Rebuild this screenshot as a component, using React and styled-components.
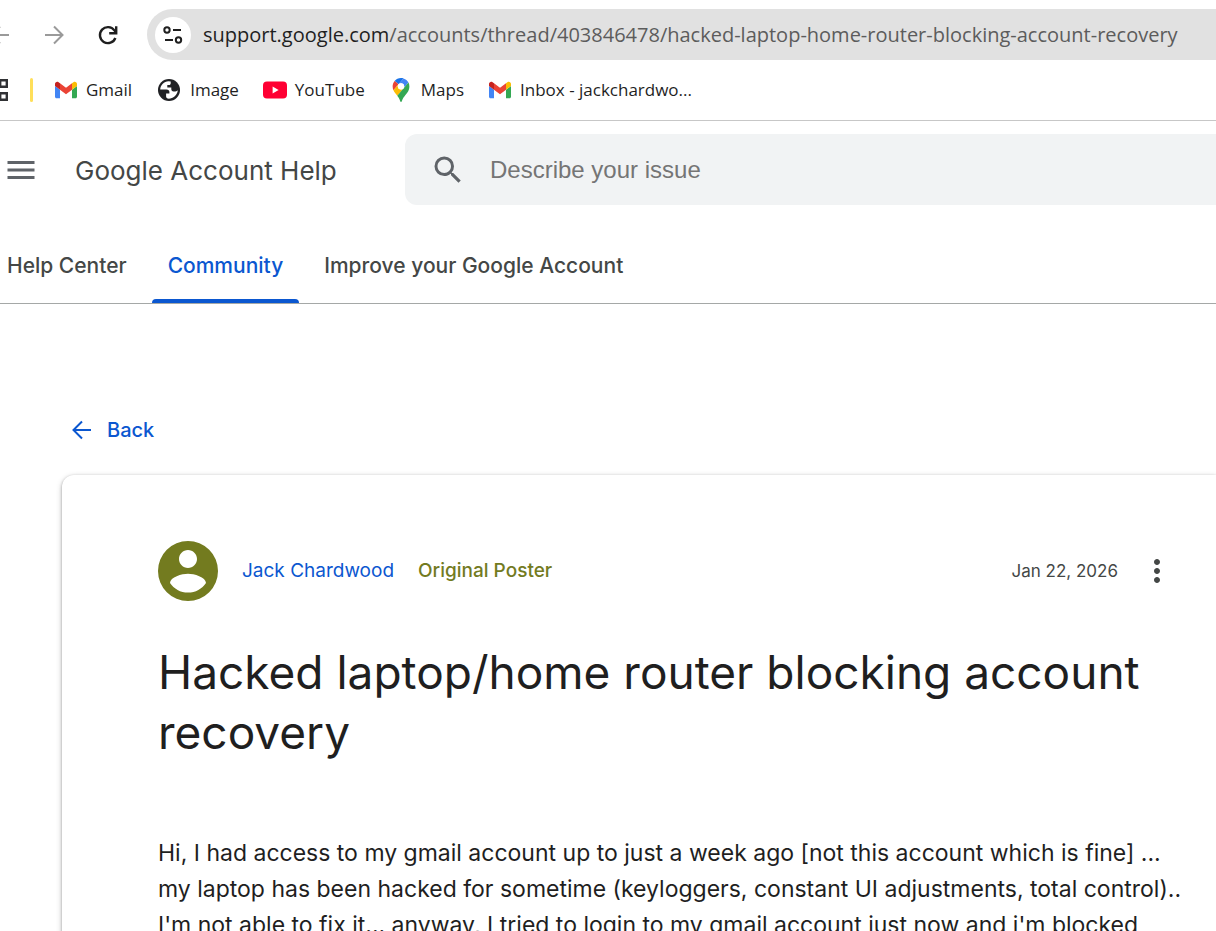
import React from 'react';
import styled, { createGlobalStyle } from 'styled-components';
import { MdSearch, MdMenu, MdMoreVert } from 'react-icons/md';

const uiFont = '"Open Sans", "Noto Sans", sans-serif';
const pageFont = 'Inter, Roboto, sans-serif';

const GlobalStyle = createGlobalStyle`
  * {
    box-sizing: border-box;
  }
  body {
    margin: 0;
    height: 100vh;
    overflow: hidden;
    background-color: #fff;
    color: #1f1f1f;
    font-family: ${pageFont};
  }
  a {
    text-decoration: none;
  }
  button {
    padding: 0;
    border: none;
    background: none;
    cursor: pointer;
  }
  svg {
    display: block;
    flex-shrink: 0;
  }
`;

const BrowserChrome = styled.div`
  height: 121px;
  padding-top: 9px;
  border-bottom: 1px solid #c7c7c7;
  font-family: ${uiFont};
`;

const NavBar = styled.div`
  display: flex;
  align-items: center;
  margin-left: -27px;
`;

const NavButton = styled.button`
  display: flex;
  align-items: center;
  justify-content: center;
  width: 54px;
  height: 51px;
  color: ${(props) => (props.$dim ? '#9a9a9a' : '#1f1f1f')};
`;

const AddressBar = styled.div`
  flex: 1;
  display: flex;
  align-items: center;
  gap: 12px;
  height: 51px;
  margin-left: 12px;
  padding-left: 8px;
  border-radius: 26px 0 0 26px;
  background-color: #e1e1e1;
  overflow: hidden;
`;

const SiteInfo = styled.button`
  display: flex;
  align-items: center;
  justify-content: center;
  flex-shrink: 0;
  width: 36px;
  height: 36px;
  border-radius: 50%;
  background-color: #fff;
`;

const Url = styled.span`
  font-size: 20px;
  line-height: 28px;
  white-space: nowrap;
  color: #5c5c5c;
  b {
    font-weight: 400;
    color: #1f1f1f;
  }
`;

const Bookmarks = styled.nav`
  display: flex;
  align-items: center;
  height: 60px;
  margin-left: -14px;
`;

const BookmarkDivider = styled.span`
  width: 3px;
  height: 24px;
  margin: 0 21px 0 22px;
  border-radius: 2px;
  background-color: #ffdf5a;
`;

const Bookmark = styled.a`
  display: flex;
  align-items: center;
  gap: 8px;
  margin-right: 24px;
  font-size: 17px;
  line-height: 24px;
  white-space: nowrap;
  color: #1f1f1f;
`;

const Header = styled.header`
  display: flex;
  align-items: center;
  height: 97px;
  padding-left: 3px;
`;

const IconButton = styled.button`
  color: ${(props) => props.$color};
`;

const Brand = styled.a`
  flex-shrink: 0;
  width: 330px;
  margin-left: 36px;
  padding-top: 2px;
  font-size: 26px;
  line-height: 32px;
  white-space: nowrap;
  color: #444746;
`;

const SearchBox = styled.label`
  flex: 1;
  display: flex;
  align-items: center;
  gap: 24px;
  height: 71px;
  padding-left: 25px;
  border-radius: 12px 0 0 12px;
  background-color: #f1f3f4;
  color: #5f6368;
  input {
    flex: 1;
    padding: 0;
    border: none;
    outline: none;
    background: none;
    font-family: "Liberation Sans", Arial, sans-serif;
    font-size: 24px;
    color: #1f1f1f;
  }
  input::placeholder {
    color: #757575;
    opacity: 1;
  }
`;

const Tabs = styled.nav`
  display: flex;
  height: 86px;
  padding-left: 7px;
  border-bottom: 1px solid #a5a8a7;
`;

const Tab = styled.a`
  display: flex;
  flex-direction: column;
  justify-content: space-between;
  margin-right: 9px;
  padding: 33px 16px 0;
  font-size: 21px;
  line-height: 30px;
  font-weight: 500;
  white-space: nowrap;
  color: ${(props) => (props.$active ? '#0b57d0' : '#444746')};
  &:first-child {
    padding-left: 0;
  }
  &::after {
    content: '';
    height: 4px;
    margin: 0 -16px;
    border-radius: 4px 4px 0 0;
    background-color: ${(props) => (props.$active ? '#0b57d0' : 'transparent')};
  }
`;

const Main = styled.main`
  padding: 108px 0 0 62px;
`;

const BackLink = styled.a`
  display: inline-flex;
  align-items: center;
  gap: 11px;
  padding-left: 6px;
  font-size: 20px;
  line-height: 36px;
  font-weight: 500;
  color: #0b57d0;
`;

const Card = styled.article`
  margin-top: 27px;
  padding: 66px 0 0 96px;
  border-radius: 12px 0 0 0;
  box-shadow: 0 1px 3px rgba(0, 0, 0, 0.3), 0 2px 6px rgba(0, 0, 0, 0.2);
`;

const PostMeta = styled.div`
  display: flex;
  align-items: center;
  gap: 24px;
  height: 60px;
  padding-right: 41px;
  font-size: 19px;
  line-height: 24px;
  white-space: nowrap;
`;

const Author = styled.a`
  color: #0b57d0;
`;

const Role = styled.span`
  font-weight: 500;
  color: #737b1f;
`;

const PostDate = styled.time`
  margin-left: auto;
  margin-right: -3px;
  font-size: 17px;
  color: #444746;
`;

const Title = styled.h1`
  margin: 41px 0 0;
  font-size: 46px;
  line-height: 60px;
  font-weight: 400;
`;

const Body = styled.p`
  margin: 73px 0 0;
  font-size: 23px;
  line-height: 36px;
  white-space: nowrap;
`;

const Arrow = ({ back, size = 28 }) => (
  <svg width={size} height={size} viewBox="0 0 28 28" fill="none" stroke="currentColor" strokeWidth="2">
    <path d={back ? 'M23 14H6M14 5.5L5.5 14l8.5 8.5' : 'M5 14h17M14 5.5l8.5 8.5-8.5 8.5'} />
  </svg>
);

const ReloadIcon = () => (
  <svg width="24" height="24" viewBox="0 0 24 24" fill="none" stroke="currentColor" strokeWidth="2.4">
    <path d="M19.4 15A8 8 0 1 1 18.4 7.4L20 9.6" />
    <path d="M20.2 3.2v7h-7" />
  </svg>
);

const TuneIcon = () => (
  <svg width="22" height="20" viewBox="0 0 22 20" fill="none" stroke="#1f1f1f" strokeWidth="2">
    <circle cx="5" cy="5" r="2.7" />
    <path d="M11 5h8M3 15h8" />
    <circle cx="16.5" cy="15" r="2.7" />
  </svg>
);

const AppsIcon = () => (
  <svg width="22" height="22" viewBox="0 0 22 22" fill="none" stroke="#303134" strokeWidth="2.4">
    <path d="M1.2 1.2h6.6v6.6h-6.6zM14.2 1.2h6.6v6.6h-6.6zM1.2 14.2h6.6v6.6h-6.6zM14.2 14.2h6.6v6.6h-6.6z" />
  </svg>
);

const GlobeIcon = () => (
  <svg width="26" height="26" viewBox="0 0 26 26">
    <circle cx="13" cy="13" r="11" fill="#202124" />
    <path
      fill="#fff"
      d="M12.5 4.2C8 4.6 4.6 8 4.2 12.4h6.300c1.900 0 2.900 1.100 2.900 2.700v1.300h-3.300v3.200c0 .9.600 1.500 1.400 2 5.200.6 9.800-3.200 10.300-8.300-.5.700-1.300 1.100-2.400 1.100h-1.800c-1.500 0-2.300-.9-2.300-2.300v-1.500h-4V7.900h1.800c1 0 1.600-.6 1.600-1.500V4.500a9 9 0 0 0-2.200-.3z"
    />
  </svg>
);

const GmailIcon = () => (
  <svg width="24" height="24" viewBox="48 42 96 66">
    <path fill="#4285f4" d="M58 108h14V74L52 59v43c0 3.32 2.69 6 6 6" />
    <path fill="#34a853" d="M120 108h14c3.32 0 6-2.69 6-6V59l-20 15" />
    <path fill="#fbbc04" d="M120 48v26l20-15v-8c0-7.42-8.47-11.65-14.4-7.2" />
    <path fill="#ea4335" d="M72 74V48l24 18 24-18v26L96 92" />
    <path fill="#c5221f" d="M52 51v8l20 15V48l-5.6-4.2c-5.94-4.45-14.4-.22-14.4 7.2" />
  </svg>
);

const YouTubeIcon = () => (
  <svg width="24" height="24" viewBox="0 0 24 24">
    <rect y="3.6" width="24" height="16.8" rx="4" fill="#ff0033" />
    <path fill="#fff" d="M9.6 8.5v7l6-3.5z" />
  </svg>
);

const MapsIcon = () => (
  <svg width="24" height="24" viewBox="0 0 92.3 132.3">
    <path fill="#1a73e8" d="M60.2 2.2C55.8.8 51 0 46.1 0 32 0 19.3 6.4 10.8 16.5l21.8 18.3L60.2 2.2z" />
    <path fill="#ea4335" d="M10.8 16.5C4.1 24.5 0 34.9 0 46.1c0 8.7 1.7 15.7 4.6 22l28-33.3-21.8-18.3z" />
    <path fill="#4285f4" d="M46.2 28.5c9.8 0 17.7 7.9 17.7 17.7 0 4.3-1.6 8.3-4.2 11.4 0 0 13.9-16.6 27.5-32.7-5.6-10.8-15.3-19-27-22.7L32.6 34.8c3.3-3.8 8.1-6.3 13.6-6.3" />
    <path fill="#fbbc04" d="M46.2 63.8c-9.8 0-17.7-7.9-17.7-17.7 0-4.3 1.5-8.3 4.1-11.3l-28 33.3c4.8 10.6 12.8 19.2 21 29.9l34.1-40.5c-3.3 3.9-8.1 6.3-13.5 6.3" />
    <path fill="#34a853" d="M59.1 109.2c15.4-24.1 33.3-35 33.3-63 0-7.7-1.9-14.9-5.2-21.3L25.6 98c2.6 3.4 5.3 7.3 7.9 11.3 9.4 14.5 6.8 23.1 12.8 23.1s3.4-8.7 12.8-23.2" />
    <circle cx="46.2" cy="46.1" r="17.7" fill="#fff" />
  </svg>
);

const Avatar = () => (
  <svg width="60" height="60" viewBox="2 2 20 20" fill="#737b1f">
    <path d="M12 2a10 10 0 1 0 0 20 10 10 0 0 0 0-20zm0 3c1.66 0 3 1.34 3 3s-1.34 3-3 3-3-1.34-3-3 1.34-3 3-3zm0 14.2c-2.5 0-4.71-1.28-6-3.22.03-1.99 4-3.08 6-3.08 1.99 0 5.97 1.09 6 3.08-1.29 1.94-3.5 3.22-6 3.22z" />
  </svg>
);

const bookmarks = [
  { name: 'Gmail', icon: <GmailIcon /> },
  { name: 'Image', icon: <GlobeIcon /> },
  { name: 'YouTube', icon: <YouTubeIcon /> },
  { name: 'Maps', icon: <MapsIcon /> },
  { name: 'Inbox - jackchardwo...', icon: <GmailIcon /> },
];

const App = () => {
  return (
    <>
      <GlobalStyle />
      <BrowserChrome>
        <NavBar>
          <NavButton $dim aria-label="Go back"><Arrow back /></NavButton>
          <NavButton $dim aria-label="Go forward"><Arrow /></NavButton>
          <NavButton aria-label="Reload"><ReloadIcon /></NavButton>
          <AddressBar>
            <SiteInfo aria-label="Site information"><TuneIcon /></SiteInfo>
            <Url><b>support.google.com</b>/accounts/thread/403846478/hacked-laptop-home-router-blocking-account-recovery</Url>
          </AddressBar>
        </NavBar>
        <Bookmarks>
          <AppsIcon />
          <BookmarkDivider />
          {bookmarks.map((item) => (
            <Bookmark href="#" key={item.name}>
              {item.icon}
              {item.name}
            </Bookmark>
          ))}
        </Bookmarks>
      </BrowserChrome>
      <Header>
        <IconButton $color="#5f6368" aria-label="Main menu"><MdMenu size={36} /></IconButton>
        <Brand href="#">Google Account Help</Brand>
        <SearchBox>
          <MdSearch size={36} />
          <input type="text" placeholder="Describe your issue" aria-label="Describe your issue" />
        </SearchBox>
      </Header>
      <Tabs>
        <Tab href="#">Help Center</Tab>
        <Tab href="#" $active>Community</Tab>
        <Tab href="#">Improve your Google Account</Tab>
      </Tabs>
      <Main>
        <BackLink href="#"><Arrow back />Back</BackLink>
        <Card>
          <PostMeta>
            <Avatar />
            <Author href="#">Jack Chardwood</Author>
            <Role>Original Poster</Role>
            <PostDate dateTime="2026-01-22">Jan 22, 2026</PostDate>
            <IconButton $color="#444746" aria-label="More options"><MdMoreVert size={36} /></IconButton>
          </PostMeta>
          <Title>Hacked laptop/home router blocking account recovery</Title>
          <Body>
            Hi, I had access to my gmail account up to just a week ago [not this account which is fine] ...<br />
            my laptop has been hacked for sometime (keyloggers, constant UI adjustments, total control)..<br />
            I'm not able to fix it... anyway, I tried to login to my gmail account just now and i'm blocked
          </Body>
        </Card>
      </Main>
    </>
  );
};

export default App;
